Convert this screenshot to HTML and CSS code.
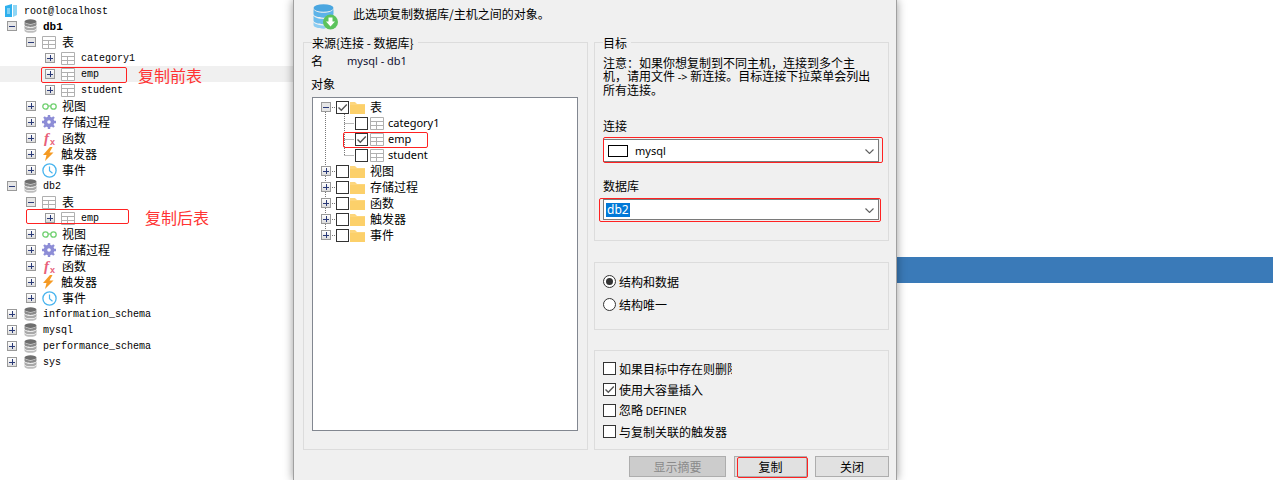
FILE: index.html
```html
<!DOCTYPE html>
<html lang="zh">
<head>
<meta charset="utf-8">
<title>复制数据库</title>
<link rel="stylesheet" href="styles.css">
</head>
<body>
<svg class="defs" aria-hidden="true">
  <symbol id="i-root" viewBox="0 0 12 13"><path d="M0 2 7 0v13H0z" fill="#2fb0ee"/><path d="M8 1h4v10l-4 2z" fill="#8fd6f5"/><path d="M2 4h3v6H2z" fill="#7fd0f3"/></symbol>
  <symbol id="i-db" viewBox="0 0 13 14"><ellipse cx="6.500" cy="2.600" rx="6" ry="2.400" fill="#6e6e6e"/><path d="M.5 3v2.600c0 1.400 2.600 2.400 6 2.400s6-1 6-2.400V3c-.6 1.500-3 2.400-6 2.400S1.100 4.500.5 3z" fill="#8a8a8a"/><path d="M.5 6.500v2.400c0 1.400 2.600 2.400 6 2.400s6-1 6-2.400V6.500c-.6 1.500-3 2.300-6 2.300S1.100 8 .5 6.500z" fill="#a8a8a8"/><path d="M.5 9.800v1.600c0 1.400 2.600 2.400 6 2.400s6-1 6-2.400V9.800c-.6 1.500-3 2.300-6 2.300S1.100 11.300.5 9.800z" fill="#bdbdbd"/></symbol>
  <symbol id="i-grid" viewBox="0 0 14 13"><path d="M.5.500h13v12H.5zM.5 4.500h13M.5 8.500h13M6.500 4.500v8" fill="#fff" stroke="#b0b0b0"/></symbol>
  <symbol id="i-view" viewBox="0 0 15 9"><circle cx="3.500" cy="4.500" r="2.700" fill="none" stroke="#6fd06f" stroke-width="1.300"/><circle cx="11.500" cy="4.500" r="2.700" fill="none" stroke="#6fd06f" stroke-width="1.300"/><path d="M6.200 4h2.600" stroke="#6fd06f" stroke-width="1.200"/></symbol>
  <symbol id="i-gear" viewBox="0 0 14 14"><circle cx="7" cy="7" r="3.600" fill="none" stroke="#8d8dd6" stroke-width="3.600"/><path d="M7 0v3M7 11v3M0 7h3M11 7h3M2 2l2 2M10 10l2 2M12 2l-2 2M4 10l-2 2" stroke="#8d8dd6" stroke-width="2.400"/></symbol>
  <symbol id="i-bolt" viewBox="0 0 11 14"><path d="M7 0 0 8h3.500L2 14 10.500 5.500H6.500L9.500 0z" fill="#f59a23"/></symbol>
  <symbol id="i-clock" viewBox="0 0 15 15"><circle cx="7.500" cy="7.500" r="6.600" fill="#fff" stroke="#48b4ee" stroke-width="1.300"/><path d="M7.500 3.500v4.300l3 2.400" fill="none" stroke="#48b4ee" stroke-width="1.200"/></symbol>
  <symbol id="i-folder" viewBox="0 0 15 13"><path d="M0 1h5l2 2h8v10H0z" fill="#fdd67c"/><path d="M0 4h15v9H0z" fill="#fcd06a"/></symbol>
  <symbol id="i-check" viewBox="0 0 13 13"><path d="M2.500 6.500 5.300 9.300 10.800 3.500" fill="none" stroke="#555" stroke-width="1.400"/></symbol>
  <symbol id="i-chev" viewBox="0 0 9 5"><path d="M.5.500 4.500 4.500 8.500.500" fill="none" stroke="#606060" stroke-width="1.100"/></symbol>
  <symbol id="i-big" viewBox="0 0 25 26"><ellipse cx="10.500" cy="4" rx="10" ry="3.800" fill="#4aa6e0"/><path d="M.5 5v5c0 2 4.500 3.700 10 3.700s10-1.700 10-3.700V5c-1 2.300-5 3.700-10 3.700S1.500 7.300.5 5z" fill="#5cb3e8"/><path d="M.5 11.500v5c0 2 4.500 3.700 10 3.700 1 0 2 0 3-.2l3-6c-2 .6-4 .9-6 .9-5 0-9-1.300-10-3.400z" fill="#6dbdec"/><path d="M.5 18v3c0 2 4.500 3.700 10 3.700l2-.2-1-3c-5 0-10-1.300-11-3.500z" fill="#8ccdf2"/><circle cx="17.500" cy="18" r="7.500" fill="#5cc35c"/><path d="M15.500 13.500h4v4h2.500l-4.500 5-4.500-5h2.500z" fill="#fff"/></symbol>
</svg>

<div class="page">
  <nav class="conn-tree">
    <div class="row root"><svg class="ic ic-root"><use href="#i-root"/></svg><span class="mono">root@localhost</span></div>

    <div class="row d0"><i class="exp minus"></i><svg class="ic ic-db"><use href="#i-db"/></svg><span class="mono bold">db1</span></div>
    <div class="row d1"><i class="exp minus"></i><svg class="ic ic-grid"><use href="#i-grid"/></svg><span>表</span></div>
    <div class="row d2"><i class="exp"></i><svg class="ic ic-grid"><use href="#i-grid"/></svg><span class="mono">category1</span></div>
    <div class="row d2 hot"><i class="exp"></i><svg class="ic ic-grid"><use href="#i-grid"/></svg><span class="mono">emp</span></div>
    <div class="row d2"><i class="exp"></i><svg class="ic ic-grid"><use href="#i-grid"/></svg><span class="mono">student</span></div>
    <div class="row d1"><i class="exp"></i><svg class="ic ic-view"><use href="#i-view"/></svg><span>视图</span></div>
    <div class="row d1"><i class="exp"></i><svg class="ic ic-gear"><use href="#i-gear"/></svg><span>存储过程</span></div>
    <div class="row d1"><i class="exp"></i><svg class="ic ic-fx" viewBox="0 0 14 15"><text class="fx-f" x="2" y="12">f</text><text class="fx-x" x="8" y="14">x</text></svg><span>函数</span></div>
    <div class="row d1"><i class="exp"></i><svg class="ic ic-bolt"><use href="#i-bolt"/></svg><span>触发器</span></div>
    <div class="row d1"><i class="exp"></i><svg class="ic ic-clock"><use href="#i-clock"/></svg><span>事件</span></div>

    <div class="row d0"><i class="exp minus"></i><svg class="ic ic-db"><use href="#i-db"/></svg><span class="mono">db2</span></div>
    <div class="row d1"><i class="exp minus"></i><svg class="ic ic-grid"><use href="#i-grid"/></svg><span>表</span></div>
    <div class="row d2"><i class="exp"></i><svg class="ic ic-grid"><use href="#i-grid"/></svg><span class="mono">emp</span></div>
    <div class="row d1"><i class="exp"></i><svg class="ic ic-view"><use href="#i-view"/></svg><span>视图</span></div>
    <div class="row d1"><i class="exp"></i><svg class="ic ic-gear"><use href="#i-gear"/></svg><span>存储过程</span></div>
    <div class="row d1"><i class="exp"></i><svg class="ic ic-fx" viewBox="0 0 14 15"><text class="fx-f" x="2" y="12">f</text><text class="fx-x" x="8" y="14">x</text></svg><span>函数</span></div>
    <div class="row d1"><i class="exp"></i><svg class="ic ic-bolt"><use href="#i-bolt"/></svg><span>触发器</span></div>
    <div class="row d1"><i class="exp"></i><svg class="ic ic-clock"><use href="#i-clock"/></svg><span>事件</span></div>

    <div class="row d0"><i class="exp"></i><svg class="ic ic-db"><use href="#i-db"/></svg><span class="mono">information_schema</span></div>
    <div class="row d0"><i class="exp"></i><svg class="ic ic-db"><use href="#i-db"/></svg><span class="mono">mysql</span></div>
    <div class="row d0"><i class="exp"></i><svg class="ic ic-db"><use href="#i-db"/></svg><span class="mono">performance_schema</span></div>
    <div class="row d0"><i class="exp"></i><svg class="ic ic-db"><use href="#i-db"/></svg><span class="mono">sys</span></div>

    <div class="mark mark-a"></div>
    <div class="note note-a">复制前表</div>
    <div class="mark mark-b"></div>
    <div class="note note-b">复制后表</div>
  </nav>

  <section class="dialog">
    <header class="dlg-head">
      <svg class="ic-big"><use href="#i-big"/></svg>
      <p>此选项复制数据库/主机之间的对象。</p>
    </header>

    <div class="dlg-cols">
      <div class="group source">
        <div class="legend">来源{连接 - 数据库}</div>
        <div class="name-row"><span>名</span><span class="latin name-val">mysql - db1</span></div>
        <div class="obj-label">对象</div>
        <div class="obj-tree">
          <svg class="lines" aria-hidden="true"><path d="M12.500 14v126M31.500 16v42M31.500 25.500h10M31.500 41.500h10M31.500 57.500h10M17 9.500h5M17 73.500h5M17 89.500h5M17 105.500h5M17 121.500h5M17 137.500h5"/></svg>
          <div class="ot-row"><i class="exp minus"></i><span class="cb on"><svg><use href="#i-check"/></svg></span><svg class="ic-folder"><use href="#i-folder"/></svg><span class="ot-text">表</span></div>
          <div class="ot-row child"><span class="cb"></span><svg class="ic ic-grid2"><use href="#i-grid"/></svg><span class="latin ot-text2">category1</span></div>
          <div class="ot-row child"><span class="cb on"><svg><use href="#i-check"/></svg></span><svg class="ic ic-grid2"><use href="#i-grid"/></svg><span class="latin ot-text2">emp</span></div>
          <div class="ot-row child"><span class="cb"></span><svg class="ic ic-grid2"><use href="#i-grid"/></svg><span class="latin ot-text2">student</span></div>
          <div class="ot-row"><i class="exp"></i><span class="cb"></span><svg class="ic-folder"><use href="#i-folder"/></svg><span class="ot-text">视图</span></div>
          <div class="ot-row"><i class="exp"></i><span class="cb"></span><svg class="ic-folder"><use href="#i-folder"/></svg><span class="ot-text">存储过程</span></div>
          <div class="ot-row"><i class="exp"></i><span class="cb"></span><svg class="ic-folder"><use href="#i-folder"/></svg><span class="ot-text">函数</span></div>
          <div class="ot-row"><i class="exp"></i><span class="cb"></span><svg class="ic-folder"><use href="#i-folder"/></svg><span class="ot-text">触发器</span></div>
          <div class="ot-row"><i class="exp"></i><span class="cb"></span><svg class="ic-folder"><use href="#i-folder"/></svg><span class="ot-text">事件</span></div>
        </div>
      </div>

      <div class="right-col">
        <div class="group target">
          <div class="legend">目标</div>
          <p class="notice">注意：如果你想复制到不同主机，连接到多个主<br>机，请用文件 <span class="latin">-&gt;</span> 新连接。目标连接下拉菜单会列出<br>所有连接。</p>
          <div class="f-label f-conn">连接</div>
          <div class="combo combo-conn"><span class="swatch"></span><span class="latin">mysql</span><svg class="chev"><use href="#i-chev"/></svg></div>
          <div class="f-label f-db">数据库</div>
          <div class="combo combo-db"><span class="latin sel">db2</span><svg class="chev"><use href="#i-chev"/></svg></div>
        </div>

        <div class="group radios">
          <div class="opt"><span class="radio on"></span><span>结构和数据</span></div>
          <div class="opt"><span class="radio"></span><span>结构唯一</span></div>
        </div>

        <div class="group checks">
          <div class="chk"><span class="cb"></span><span class="clip">如果目标中存在则删除</span></div>
          <div class="chk"><span class="cb on"><svg><use href="#i-check"/></svg></span><span>使用大容量插入</span></div>
          <div class="chk"><span class="cb"></span><span>忽略 <span class="latin small">DEFINER</span></span></div>
          <div class="chk"><span class="cb"></span><span>与复制关联的触发器</span></div>
        </div>
      </div>
    </div>

    <footer class="dlg-foot">
      <button class="btn btn-off" type="button">显示摘要</button>
      <button class="btn btn-copy" type="button">复制</button>
      <button class="btn btn-close" type="button">关闭</button>
    </footer>

    <div class="mark dm-emp"></div>
    <div class="mark dm-conn"></div>
    <div class="mark dm-db"></div>
    <div class="mark dm-copy"></div>
  </section>

  <aside class="backdrop"><div class="band"></div></aside>
</div>
</body>
</html>
```
FILE: styles.css
```css
* { box-sizing: border-box; }
html, body { margin: 0; padding: 0; }
body {
  background: #fff;
  color: #000;
  font: 12px/16px "Noto Sans CJK SC", "Liberation Sans", sans-serif;
  overflow: hidden;
}
p { margin: 0; }
.defs { position: absolute; width: 0; height: 0; }
.page { display: flex; width: 1273px; height: 480px; overflow: hidden; }

.mono { font: 10px/14px "Liberation Mono", monospace; }
.bold { font-weight: 700; font-size: 11px; }
.latin { font-family: "Noto Sans", "Liberation Sans", sans-serif; font-size: 11px; }

/* connection tree */
.conn-tree { position: relative; flex: 0 0 293px; padding-top: 2px; }
.row { display: flex; align-items: center; height: 16px; white-space: nowrap; }
.row span { line-height: 16px; }
.row .mono { line-height: 14px; padding-top: 2px; }
.root { padding-left: 5px; }
.root .mono { padding-top: 4px; }
.d0 { padding-left: 7px; }
.d1 { padding-left: 26px; }
.d2 { padding-left: 45px; }
.hot { background: #f0f0f0; }
.exp {
  position: relative;
  flex: none;
  width: 10px;
  height: 10px;
  border: 1px solid #9a9a9a;
  background: linear-gradient(#fff, #dcdcdc);
}
.exp.minus { background: #e6e6e6; }
.exp::before, .exp:not(.minus)::after {
  content: "";
  position: absolute;
  background: #2a3a78;
}
.exp::before { left: 1px; top: 3.500px; width: 6px; height: 1px; }
.exp:not(.minus)::after { left: 3.500px; top: 1px; width: 1px; height: 6px; }
.ic { flex: none; display: block; }
.row .ic { margin-left: 6px; margin-right: 6px; width: 14px; height: 13px; }
.row .ic-root { width: 12px; height: 13px; margin: 0 7px 0 0; }
.row .ic-db { width: 13px; height: 14px; margin-left: 7px; margin-right: 6px; }
.row .ic-view { width: 15px; height: 9px; margin-right: 5px; }
.row .ic-gear { width: 14px; height: 14px; }
.row .ic-fx { width: 14px; height: 15px; overflow: visible; }
.row .ic-bolt { width: 11px; height: 14px; margin: 0 7px 0 7px; }
.row .ic-clock { width: 15px; height: 15px; margin-right: 5px; }
.fx-f { font: italic 700 15px "Liberation Serif", serif; fill: #e8607a; }
.fx-x { font: 700 9px "Liberation Sans", sans-serif; fill: #e8607a; }

/* red annotations */
.mark { position: absolute; border: 1px solid #f22; border-radius: 2px; }
.mark-a { left: 41px; top: 67px; width: 86px; height: 16px; }
.mark-b { left: 26px; top: 209px; width: 103px; height: 15px; }
.note { position: absolute; color: #f33; font-size: 16px; line-height: 20px; white-space: nowrap; }
.note-a { left: 138px; top: 65px; }
.note-b { left: 145px; top: 207px; }

/* dialog */
.dialog {
  position: relative;
  z-index: 1;
  flex: 0 0 604px;
  display: flex;
  flex-direction: column;
  border-left: 1px solid #a0a0a0;
  border-right: 1px solid #a0a0a0;
  background: #f0f0f0;
  box-shadow: 0 0 9px rgba(0, 0, 0, .4);
}
.dlg-head { display: flex; align-items: flex-start; height: 42px; padding: 4px 0 0 19px; }
.ic-big { width: 25px; height: 26px; flex: none; }
.dlg-head p { margin: 2px 0 0 15px; line-height: 16px; }
.dlg-cols { display: flex; gap: 6px; padding-left: 9px; }
.group { position: relative; border: 1px solid #dcdcdc; }
.legend {
  position: absolute;
  left: 8px;
  top: -7px;
  padding-right: 4px;
  background: #f0f0f0;
  line-height: 14px;
  white-space: nowrap;
}
.source { flex: 0 0 285px; height: 408px; padding: 10px 8px 0 7px; }
.name-row { display: flex; height: 16px; }
.name-val { margin-left: 24px; color: #101030; }
.obj-label { margin-top: 7px; height: 16px; }
.obj-tree {
  position: relative;
  width: 266px;
  height: 334px;
  margin: 5px 0 0 1px;
  padding: 1px 0 0 8px;
  border: 1px solid #828790;
  background: #fff;
}
.lines { position: absolute; left: 0; top: 0; width: 80px; height: 150px; }
.lines path { fill: none; stroke: #777; stroke-dasharray: 1 1; }
.ot-row { position: relative; display: flex; align-items: center; height: 16px; white-space: nowrap; }
.ot-row .exp { margin-right: 5px; }
.ot-row.child { padding-left: 34px; }
.cb {
  position: relative;
  flex: none;
  width: 13px;
  height: 13px;
  border: 1px solid #333;
  background: #fff;
  display: block;
}
.cb svg { position: absolute; left: -1px; top: -1px; width: 13px; height: 13px; }
.ic-folder { width: 15px; height: 13px; margin-left: 1px; flex: none; }
.ot-text { margin-left: 5px; }
.ic-grid2 { width: 14px; height: 13px; margin-left: 2px; }
.ot-text2 { margin-left: 4px; }

.right-col { flex: 0 0 295px; display: flex; flex-direction: column; }
.target { height: 199px; padding: 13px 0 0 8px; }
.notice { line-height: 13px; white-space: nowrap; }
.f-label { height: 16px; line-height: 16px; }
.f-conn { margin-top: 22px; }
.f-db { margin-top: 16px; }
.combo {
  position: relative;
  display: flex;
  align-items: center;
  width: 276px;
  border: 1px solid #7a7a7a;
  background: #fff;
}
.combo-conn { height: 23px; margin-top: 5px; padding-left: 4px; }
.combo-db { height: 21px; margin-top: 5px; padding-left: 2px; }
.swatch { width: 20px; height: 12px; margin-right: 7px; border: 1px solid #000; background: #fff; }
.sel { padding: 0 1px; background: #0078d7; color: #fff; line-height: 14px; font-size: 12px; }
.chev { position: absolute; right: 4px; top: 50%; width: 9px; height: 5px; margin-top: -2px; }
.radios { height: 68px; margin-top: 21px; padding: 7px 0 0 8px; }
.opt { display: flex; align-items: center; height: 23px; }
.radio {
  position: relative;
  flex: none;
  width: 13px;
  height: 13px;
  margin-right: 3px;
  border: 1px solid #333;
  border-radius: 50%;
  background: #fff;
}
.radio.on::after {
  content: "";
  position: absolute;
  left: 2px;
  top: 2px;
  width: 7px;
  height: 7px;
  border-radius: 50%;
  background: #333;
}
.checks { height: 100px; margin-top: 20px; padding: 7px 0 0 8px; }
.chk { display: flex; align-items: center; gap: 3px; height: 21px; white-space: nowrap; }
.clip { display: block; width: 113px; overflow: hidden; }
.small { font-size: 10px; }

.dlg-foot { display: flex; justify-content: flex-end; gap: 8px; margin-top: 6px; padding-right: 7px; }
.btn {
  height: 21px;
  padding: 0;
  border: 1px solid #adadad;
  background: #e1e1e1;
  color: #000;
  font: inherit;
  line-height: 18px;
}
.btn-off { width: 97px; background: #ccc; color: #8a8a8a; }
.btn-copy { width: 73px; }
.btn-close { width: 74px; }

.dm-emp { left: 49px; top: 132px; width: 85px; height: 16px; }
.dm-conn { left: 309px; top: 137px; width: 280px; height: 26px; }
.dm-db { left: 305px; top: 198px; width: 282px; height: 24px; }
.dm-copy { left: 443px; top: 457px; width: 71px; height: 21px; }

.backdrop { flex: 1; background: #fff; padding-top: 257px; }
.band { height: 26px; background: #3a7ab8; }
```
